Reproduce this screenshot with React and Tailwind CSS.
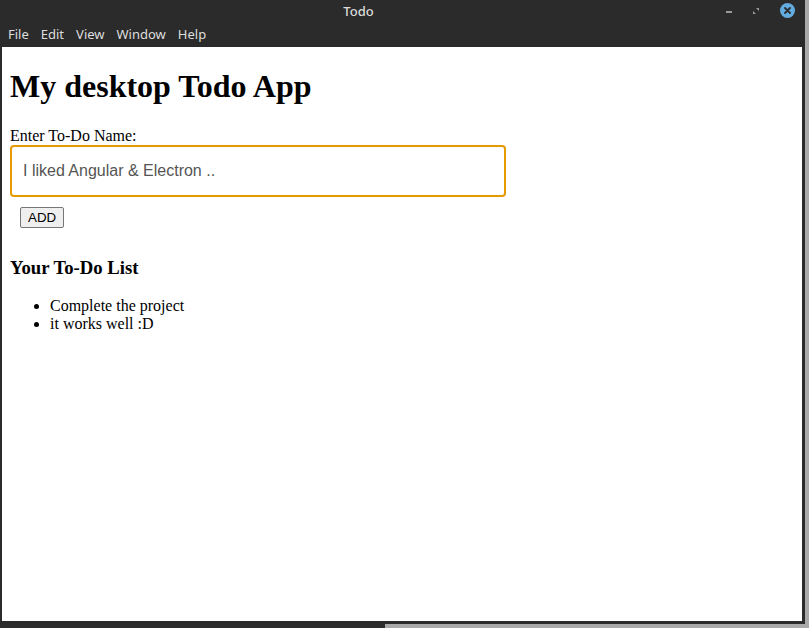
import { useState } from 'react';

const MENU = ['File', 'Edit', 'View', 'Window', 'Help'];

export default function App() {
  const [todos, setTodos] = useState(['Complete the project', 'it works well :D']);
  const [name, setName] = useState('');

  function addTodo() {
    const t = name.trim();
    if (!t) return;
    setTodos([...todos, t]);
    setName('');
  }

  return (
    <div className="flex h-[628px] w-[809px] flex-col overflow-hidden bg-[#2c2c2c]">
      <div className="flex h-[624px]">
        <div className="flex w-[805px] flex-col bg-[#2b2b2b]">
          {/* title bar */}
          <div className="relative flex h-[24px] items-center justify-center pr-[88px] font-['Noto_Sans',sans-serif] text-[13px] font-medium text-[#dcdcdc]">
            <span>Todo</span>
            <div className="absolute right-[10px] top-[3px] flex items-center gap-[15px]">
              <span className="mt-[2px] block h-[2px] w-[6px] bg-[#9a9a9a]" />
              <svg width="8" height="8" viewBox="0 0 8 8" className="mx-[5px]">
                <path d="M1 7 L1 4 L4 7 Z M7 1 L7 4 L4 1 Z" fill="#9a9a9a" />
              </svg>
              <span className="flex h-[15px] w-[15px] items-center justify-center rounded-full bg-[#62ace0]">
                <svg width="7" height="7" viewBox="0 0 7 7">
                  <path d="M1 1 L6 6 M6 1 L1 6" stroke="#2b2b2b" strokeWidth="1.8" strokeLinecap="round" />
                </svg>
              </span>
            </div>
          </div>
          {/* menu bar */}
          <div className="flex h-[23px] items-center gap-[12px] pb-[2px] pl-[8px] font-['Noto_Sans',sans-serif] text-[13px] text-[#dedede]">
            {MENU.map((m) => (
              <span key={m}>{m}</span>
            ))}
          </div>
          {/* content */}
          <div className="ml-[2px] mr-[3px] mb-[3px] flex-1 bg-white px-[8px] font-['Liberation_Serif',serif] text-[16px] leading-[18px] text-black">
            <h1 className="mt-[21px] mb-[21px] text-[32px] font-bold leading-[37px]">My desktop Todo App</h1>
            <label className="block leading-[19px]">Enter To-Do Name:</label>
            <input
              type="text"
              value={name}
              onChange={(e) => setName(e.target.value)}
              placeholder="I liked Angular & Electron .."
              className="block h-[52px] w-[496px] rounded-[4px] border-2 border-[#e69a00] px-[11px] font-['Liberation_Sans',sans-serif] text-[16px] text-[#444] outline-none placeholder:text-[#555]"
            />
            <button
              onClick={addTodo}
              className="mt-[10px] ml-[10px] block h-[21px] rounded-[2px] border border-[#767676] bg-[#efefef] px-[7px] font-['Liberation_Sans',sans-serif] text-[13.33px] leading-[16px] text-black"
            >
              ADD
            </button>
            <h3 className="mt-[29px] mb-[18px] text-[18.72px] font-bold leading-[22px]">Your To-Do List</h3>
            <ul className="list-disc pl-[40px]">
              {todos.map((t, i) => (
                <li key={i} className="leading-[18px]">
                  {t}
                </li>
              ))}
            </ul>
          </div>
        </div>
        <div className="flex-1 bg-[#a9a9a9]" />
      </div>
      <div className="flex h-[4px]">
        <div className="w-[385px] bg-[#2c2c2c]" />
        <div className="flex-1 bg-[#a9a9a9]" />
      </div>
    </div>
  );
}
